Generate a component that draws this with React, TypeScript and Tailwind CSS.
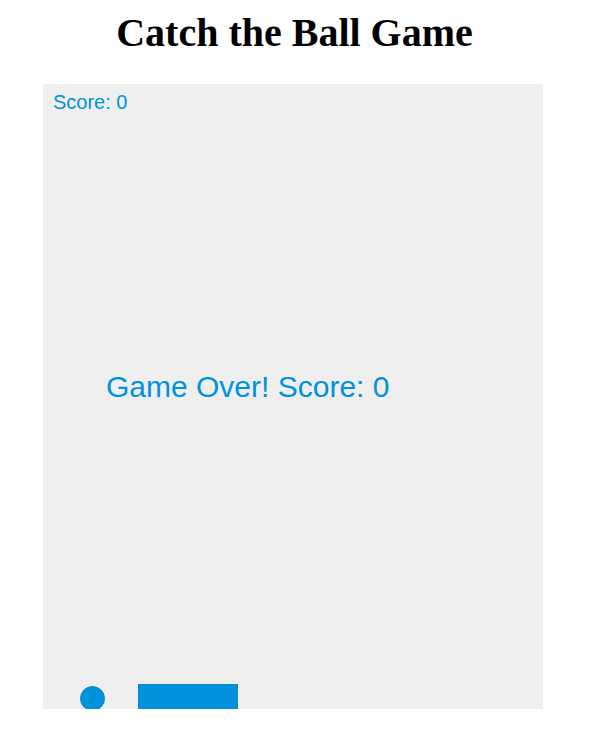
const BLUE = '#0092dd';

const App = () => {
  return (
    <div className="w-[589px] min-h-[737px] bg-white">
      <h1 className="mt-[10px] mb-[28px] text-center text-[40px] leading-[46px] font-bold text-black [font-family:'Liberation_Serif',serif]">
        Catch the Ball Game
      </h1>

      <div className="relative ml-[43px] w-[500px] h-[625px] bg-[#efefef] overflow-hidden [font-family:'Liberation_Sans',Arial,sans-serif]">
        <p className="absolute left-[10px] top-[8px] text-[20px] leading-[20px] text-[#0092dd] whitespace-nowrap">
          Score: 0
        </p>

        <p className="absolute left-[63px] top-[288px] text-[30px] leading-[30px] text-[#0092dd] whitespace-nowrap">
          Game Over! Score: 0
        </p>

        {/* ball */}
        <svg className="absolute left-[36px] top-[601px]" width="27" height="27" viewBox="0 0 27 27">
          <circle cx="13.5" cy="13.5" r="12" fill={BLUE} stroke="#0a84cc" strokeWidth="1" />
        </svg>

        {/* paddle */}
        <div className="absolute left-[95px] top-[600px] w-[100px] h-[25px] bg-[#0092dd] border border-[#0a8ad2]" />
      </div>
    </div>
  );
};

export default App;
